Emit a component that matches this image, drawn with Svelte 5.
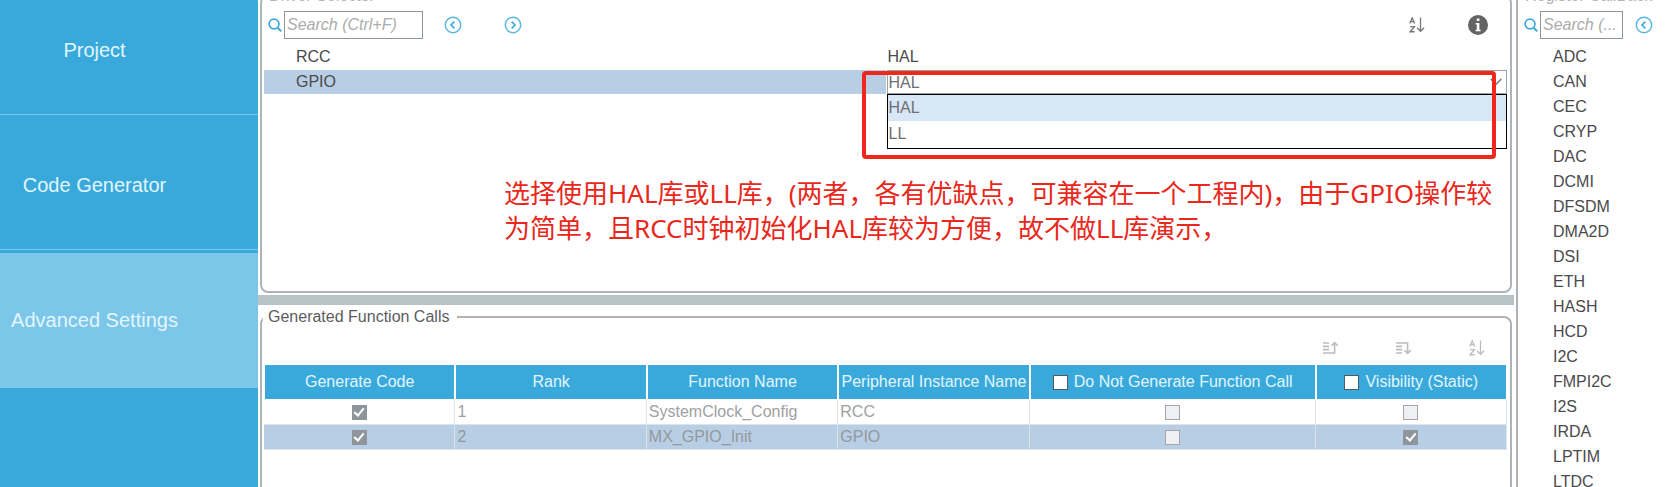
<script>
  const sections = ['Project', 'Code Generator', 'Advanced Settings'];
  let section = $state('Advanced Settings');
  let driver = $state('HAL');
  const drivers = ['HAL', 'LL'];

  const peripherals = [
    'ADC', 'CAN', 'CEC', 'CRYP', 'DAC', 'DCMI', 'DFSDM', 'DMA2D', 'DSI', 'ETH',
    'HASH', 'HCD', 'I2C', 'FMPI2C', 'I2S', 'IRDA', 'LPTIM', 'LTDC'
  ];

  const calls = [
    { rank: 1, fn: 'SystemClock_Config', instance: 'RCC', generate: true, skip: false, visible: false },
    { rank: 2, fn: 'MX_GPIO_Init', instance: 'GPIO', generate: true, skip: false, visible: true }
  ];
</script>

{#snippet magnifier()}
  <svg class="lens" width="14" height="16" viewBox="0 0 14 16" aria-hidden="true">
    <circle cx="6" cy="7" r="4.9" fill="none" stroke="#39a9dc" stroke-width="1.7" />
    <path d="M9.6 10.7 L13.2 14.4" stroke="#39a9dc" stroke-width="2" />
  </svg>
{/snippet}

{#snippet circled(d)}
  <svg width="18" height="18" viewBox="0 0 18 18" aria-hidden="true">
    <circle cx="9" cy="9" r="7.7" fill="none" stroke="#5bb8e2" stroke-width="1.5" />
    <path {d} fill="none" stroke="#39a9dc" stroke-width="1.6" />
  </svg>
{/snippet}

{#snippet sortAz(color)}
  <svg width="16" height="16" viewBox="0 0 16 16" fill="none" stroke={color} aria-hidden="true">
    <path d="M.8 6.6 L3.2 .8 L5.6 6.6 M1.6 4.7 H4.8" stroke-width="1.3" />
    <path d="M1 9.6 H5.4 L1 14.8 H5.6" stroke-width="1.4" />
    <path d="M11.5 .5 V14 M8 10.8 L11.5 14.3 L15 10.8" stroke-width="1.3" />
  </svg>
{/snippet}

<div class="page">
  <nav>
    {#each sections as name}
      <button class="section" class:active={section === name} onclick={() => (section = name)}>
        <span>{name}</span>
      </button>
    {/each}
  </nav>

  <main>
    <fieldset class="drivers">
      <legend>Driver Selector</legend>
      <div class="toolbar">
        {@render magnifier()}
        <input class="search" type="text" placeholder="Search (Ctrl+F)" aria-label="Search drivers" />
        <button class="icon prev" aria-label="Previous">{@render circled('M10.4 5.6 L7 9 L10.4 12.4')}</button>
        <button class="icon next" aria-label="Next">{@render circled('M7.6 5.6 L11 9 L7.6 12.4')}</button>
        <span class="spacer"></span>
        <button class="icon" aria-label="Sort">{@render sortAz('#777')}</button>
        <button class="icon info" aria-label="Information">
          <svg width="20" height="20" viewBox="0 0 20 20" aria-hidden="true">
            <circle cx="10" cy="10" r="10" fill="#646464" />
            <path d="M8.8 3.6 H11.4 V6 H8.8 Z M7.6 8 H11.4 V14.8 H12.6 V16.2 H7.6 V14.8 H8.8 V9.4 H7.6 Z" fill="#fff" />
          </svg>
        </button>
      </div>

      <div class="row"><span>RCC</span><span class="value">HAL</span></div>
      <div class="row selected">
        <span>GPIO</span>
        <div class="combo">
          <select bind:value={driver} aria-label="GPIO driver">
            {#each drivers as name}<option>{name}</option>{/each}
          </select>
          <svg class="arrow" width="12" height="8" viewBox="0 0 12 8" aria-hidden="true">
            <path d="M.7 1 L6 6.3 L11.3 1" fill="none" stroke="#777" stroke-width="1.4" />
          </svg>
          <div class="popup" role="listbox" aria-label="GPIO driver options">
            {#each drivers as name}
              <button role="option" aria-selected={driver === name} onclick={() => (driver = name)}>{name}</button>
            {/each}
          </div>
          <div class="frame"></div>
        </div>
      </div>

      <p class="note" lang="zh-CN">
        <span>选择使用HAL库或LL库，(两者，各有优缺点，可兼容在一个工程内)，由于GPIO操作较</span>
        <span>为简单，且RCC时钟初始化HAL库较为方便，故不做LL库演示，</span>
      </p>
    </fieldset>

    <div class="splitter"></div>

    <fieldset class="functions">
      <legend>Generated Function Calls</legend>
      <div class="actions">
        <button class="icon" aria-label="Move up">
          <svg width="16" height="14" viewBox="0 0 16 14" fill="none" stroke="#bcbcbc" aria-hidden="true">
            <path d="M0 2 H6 M0 5.3 H6 M0 8.6 H6 M0 12 H8" stroke-width="1.7" />
            <path d="M8 12 H11.6 V2 M8.4 4.8 L11.6 1.6 L14.8 4.8" stroke-width="1.6" />
          </svg>
        </button>
        <button class="icon" aria-label="Move down">
          <svg width="16" height="14" viewBox="0 0 16 14" fill="none" stroke="#bcbcbc" aria-hidden="true">
            <path d="M0 2 H8 M0 5.3 H6 M0 8.6 H6 M0 12 H6" stroke-width="1.7" />
            <path d="M8 2 H11.6 V12 M8.4 9.2 L11.6 12.4 L14.8 9.2" stroke-width="1.6" />
          </svg>
        </button>
        <button class="icon" aria-label="Sort by name">{@render sortAz('#bcbcbc')}</button>
      </div>

      <table>
        <colgroup>
          <col class="std" /><col class="std" /><col class="std" /><col class="std" /><col /><col class="std" />
        </colgroup>
        <thead>
          <tr>
            <th>Generate Code</th>
            <th>Rank</th>
            <th>Function Name</th>
            <th>Peripheral Instance Name</th>
            <th><label><input type="checkbox" />Do Not Generate Function Call</label></th>
            <th><label><input type="checkbox" />Visibility (Static)</label></th>
          </tr>
        </thead>
        <tbody>
          {#each calls as call}
            <tr class:current={call.rank === 2}>
              <td class="tick"><input type="checkbox" checked={call.generate} disabled aria-label="Generate code" /></td>
              <td>{call.rank}</td>
              <td>{call.fn}</td>
              <td>{call.instance}</td>
              <td class="tick"><input type="checkbox" checked={call.skip} disabled aria-label="Do not generate function call" /></td>
              <td class="tick"><input type="checkbox" checked={call.visible} disabled aria-label="Visibility" /></td>
            </tr>
          {/each}
        </tbody>
      </table>
    </fieldset>
  </main>

  <fieldset class="callbacks">
    <legend>Register CallBack</legend>
    <div class="toolbar">
      {@render magnifier()}
      <input class="search" type="text" placeholder="Search (..." aria-label="Search peripherals" />
      <button class="icon prev" aria-label="Previous">{@render circled('M10.4 5.6 L7 9 L10.4 12.4')}</button>
    </div>
    <ul>
      {#each peripherals as name}<li>{name}</li>{/each}
    </ul>
  </fieldset>
</div>

<style>
  :global(body) {
    margin: 0;
    background: #fff;
  }
  .page {
    display: flex;
    height: 100vh;
    overflow: hidden;
    background: #fff;
    color: #4a4a4c;
    font: 16px/18px "Liberation Sans", Arial, sans-serif;
  }
  button,
  select,
  input {
    font: inherit;
    color: inherit;
    box-sizing: border-box;
    margin: 0;
  }
  button {
    border: 0;
    padding: 0;
    background: none;
  }
  svg {
    display: block;
    flex: none;
  }

  nav {
    flex: none;
    display: flex;
    flex-direction: column;
    width: 258px;
    background: #39a9dc;
  }
  .section {
    flex: none;
    display: flex;
    flex-direction: column;
    height: 135px;
    color: #e2f6ff;
    font-size: 20px;
    line-height: 24px;
  }
  .section:first-child {
    margin-top: -17px;
  }
  .section span {
    width: 189px;
    padding: 55px 0 52px;
    text-align: center;
  }
  .section::after {
    content: "";
    align-self: stretch;
    height: 1px;
    background: #7bc6e9;
  }
  .section.active {
    background: #7bc6e9;
  }

  main {
    flex: 1;
    min-width: 0;
    display: flex;
    flex-direction: column;
  }
  fieldset {
    box-sizing: border-box;
    min-width: 0;
    margin: 0;
    padding: 0;
    border: 2px solid #adb3b7;
    border-radius: 8px;
  }
  legend {
    padding: 0 8px 0 5px;
    color: #5c5c5e;
  }
  .drivers {
    position: relative;
    height: 306px;
    margin: -13px 2px 2px;
    padding: 0 3px 0 2px;
  }
  .drivers legend,
  .callbacks legend {
    color: #b4b4b6;
  }
  .splitter {
    flex: none;
    height: 10px;
    background: #b8c3c8;
  }
  .functions {
    flex: 1;
    margin: 3px 2px -10px;
    padding: 0 3px 0 2px;
  }
  .functions legend {
    margin-left: -1px;
  }
  .callbacks {
    flex: none;
    width: 150px;
    margin: -13px 0 -10px 2px;
    border-right: 0;
    border-radius: 0;
  }
  .callbacks legend {
    padding-left: 7px;
  }

  .toolbar {
    display: flex;
    align-items: center;
    height: 28px;
    padding: 6px 19px 6px 4px;
  }
  .lens {
    margin-right: 2px;
  }
  .search {
    width: 139px;
    height: 28px;
    padding: 0 2px;
    border: 1px solid #8f979c;
    outline: 0;
    background: #fff;
  }
  .search::placeholder {
    color: #acacac;
    font-style: italic;
    opacity: 1;
  }
  .prev {
    margin-left: 21px;
  }
  .next {
    margin-left: 42px;
  }
  .spacer {
    flex: 1;
  }
  .info {
    margin-left: 43px;
  }
  .callbacks .toolbar {
    padding: 6px 0 6px 6px;
  }
  .callbacks .search {
    width: 83px;
  }
  .callbacks .prev {
    margin-left: 12px;
  }

  .row {
    display: grid;
    grid-template-columns: 1fr 1fr;
    height: 25px;
    line-height: 24px;
  }
  .row > span {
    padding-left: 32px;
  }
  .row > .value {
    padding-left: 2px;
  }
  .row.selected > span {
    height: 24px;
    background: #b8cee4;
  }
  .combo {
    position: relative;
    height: 24px;
    margin-left: 1px;
  }
  select {
    display: block;
    width: 100%;
    height: 24px;
    padding: 0 1px;
    border: 1px solid #9aa1a6;
    border-radius: 0;
    background: #fff;
    color: #6e6e72;
    appearance: none;
  }
  .arrow {
    position: absolute;
    top: 8px;
    right: 5px;
  }
  .popup {
    position: absolute;
    top: 24px;
    left: 0;
    right: 0;
    display: flex;
    flex-direction: column;
    padding: 0 0 1px;
    border: 1px solid #000;
    background: #fff;
  }
  .popup button {
    height: 26px;
    padding-left: 1px;
    color: #6e6e72;
    text-align: left;
  }
  .popup button[aria-selected="true"] {
    background: #d8e7f5;
  }
  .frame {
    position: absolute;
    top: 1px;
    left: -25px;
    right: 11px;
    height: 80px;
    border: 4px solid #f0281c;
    border-radius: 4px;
    pointer-events: none;
  }
  .note {
    position: absolute;
    top: 171px;
    left: 242px;
    margin: 0;
    color: #e8281c;
    font: 26px/35px "Noto Sans", "Noto Sans CJK SC", sans-serif;
    white-space: nowrap;
  }
  .note span {
    display: block;
  }

  .actions {
    display: flex;
    justify-content: flex-end;
    align-items: center;
    gap: 57px;
    height: 34px;
    padding: 5px 22px 0 0;
  }
  table {
    width: 100%;
    table-layout: fixed;
    border-collapse: separate;
    border-spacing: 0;
  }
  .std {
    width: 15.4%;
  }
  th {
    height: 34px;
    padding: 0;
    border: solid #fff;
    border-width: 0 1px 1px;
    background: #39a9dc;
    color: #e2f6ff;
    font-weight: normal;
    white-space: nowrap;
  }
  th label {
    display: flex;
    justify-content: center;
    align-items: center;
    gap: 6px;
  }
  td {
    height: 24px;
    padding: 0 0 0 2px;
    border: solid #dde3e9;
    border-width: 0 1px 1px 0;
    color: #a0a0a2;
  }
  .current td {
    background: #b8cee4;
    color: #94989d;
  }
  .tick {
    padding: 0;
    text-align: center;
  }
  input[type="checkbox"] {
    appearance: none;
    display: grid;
    place-items: center;
    width: 15px;
    height: 15px;
    border: 1px solid #4b5a63;
    background: #fff;
  }
  .tick input[type="checkbox"] {
    margin: 0 auto;
    border-color: #a2a6ab;
    background: #eff0f3;
  }
  .tick input[type="checkbox"]:checked {
    border-color: #8f969b;
    background: #8f969b;
  }
  input[type="checkbox"]:checked::after {
    content: "";
    width: 4px;
    height: 8px;
    margin-bottom: 2px;
    border: solid #fff;
    border-width: 0 2px 2px 0;
    transform: rotate(40deg);
  }

  ul {
    margin: 0;
    padding: 0 0 0 35px;
    list-style: none;
  }
  li {
    height: 25px;
    line-height: 24px;
  }
</style>
